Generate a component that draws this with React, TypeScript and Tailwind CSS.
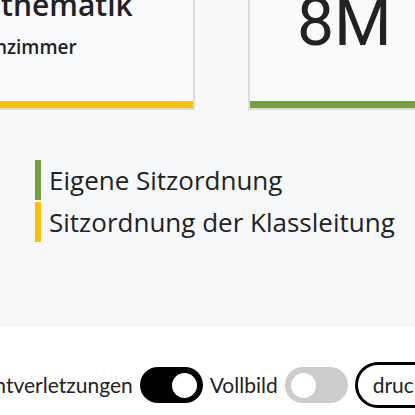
import { useState } from 'react'

const LEGEND = [
  { label: 'Eigene Sitzordnung', color: 'bg-[#77a23b]' },
  { label: 'Sitzordnung der Klassleitung', color: 'bg-[#ffc107]' },
]

function Toggle({ on, onChange }: { on: boolean; onChange: () => void }) {
  return (
    <button
      onClick={onChange}
      className={[
        'w-[63px] h-[36px] rounded-full flex items-center px-[6px] shrink-0',
        on ? 'bg-black justify-end' : 'bg-[#cccccc] justify-start',
      ].join(' ')}
    >
      <span className="block w-[25px] h-[25px] rounded-full bg-white" />
    </button>
  )
}

export default function App() {
  const [marks, setMarks] = useState(true)
  const [full, setFull] = useState(false)

  return (
    <div className="w-[415px] h-[415px] overflow-hidden bg-white text-[#222222]">
      {/* grey board */}
      <div className="h-[327px] bg-[#f7f8fa] overflow-hidden">
        <div className="flex gap-[53px] -ml-[105px] -mt-[40px]">
          {/* lesson card */}
          <div className="w-[300px] h-[150px] shrink-0 flex flex-col bg-[#f9fafb] border-r-2 border-b-2 border-[#dcdcdc]">
            <div className="flex-1 pl-[61px] pt-[27px]" style={{ fontFamily: '"Open Sans", sans-serif' }}>
              <p className="text-[30px] leading-[36px] font-semibold whitespace-nowrap">Mathematik</p>
              <p className="text-[19px] leading-[24px] font-semibold mt-[12px] whitespace-nowrap -ml-[19px]">Klassenzimmer</p>
            </div>
            <div className="h-[7px] bg-[#ffc107]" />
          </div>

          {/* class card */}
          <div className="w-[300px] h-[150px] shrink-0 flex flex-col bg-[#f9fafb] border-l-2 border-b-2 border-[#dcdcdc]">
            <div className="flex-1 pl-[47px] pt-[30px]" style={{ fontFamily: 'Roboto, sans-serif' }}>
              <p className="text-[66px] leading-[66px] whitespace-nowrap">8M</p>
            </div>
            <div className="h-[7px] bg-[#77a23b]" />
          </div>
        </div>

        {/* legend */}
        <div className="mt-[50px] ml-[35px] flex flex-col gap-[2px]" style={{ fontFamily: '"Open Sans", sans-serif' }}>
          {LEGEND.map(({ label, color }) => (
            <div key={label} className="flex items-stretch h-[40px] gap-[8px]">
              <span className={`w-[6px] ${color}`} />
              <span className="text-[26px] leading-[40px] whitespace-nowrap">{label}</span>
            </div>
          ))}
        </div>
      </div>

      {/* toolbar */}
      <div className="pt-[35px] flex items-center -ml-[32px] gap-[7px] whitespace-nowrap" style={{ fontFamily: 'Lato, sans-serif' }}>
        <span className="text-[21px]">Sichtverletzungen</span>
        <Toggle on={marks} onChange={() => setMarks(!marks)} />
        <span className="text-[21px]">Vollbild</span>
        <Toggle on={full} onChange={() => setFull(!full)} />
        <button className="h-[46px] shrink-0 rounded-full border-[3px] border-black pl-[15px] pr-[20px] text-[21px] bg-white">
          drucken
        </button>
      </div>
    </div>
  )
}
